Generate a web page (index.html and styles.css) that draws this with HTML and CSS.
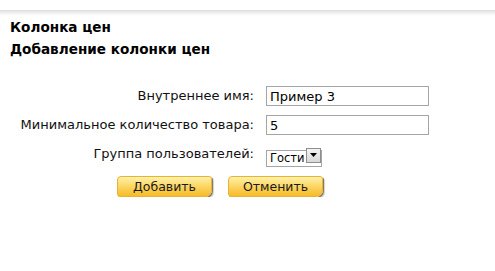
FILE: index.html
```html
<!DOCTYPE html>
<html lang="ru">
<head>
<meta charset="utf-8">
<title>Колонка цен</title>
<link rel="stylesheet" href="styles.css">
</head>
<body>
<div class="topband"></div>
<div class="header">
  <div class="title">Колонка цен</div>
  <div class="title">Добавление колонки цен</div>
</div>
<form class="form">
  <label class="lbl" for="name">Внутреннее имя:</label>
  <input class="txt" id="name" type="text" value="Пример 3">
  <label class="lbl" for="qty">Минимальное количество товара:</label>
  <input class="txt" id="qty" type="text" value="5">
  <label class="lbl" for="grp">Группа пользователей:</label>
  <span class="selwrap">
    <select class="sel" id="grp"><option>Гости</option></select>
    <span class="arrow"><svg width="7" height="4" viewBox="0 0 7 4"><path d="M0 0H7L3.5 4Z" fill="#000"/></svg></span>
  </span>
</form>
<div class="buttons">
  <button class="btn" type="button">Добавить</button>
  <button class="btn" type="button">Отменить</button>
</div>
</body>
</html>
```
FILE: styles.css
```css
html, body {
  margin: 0;
  padding: 0;
  background: #fff;
}
body {
  font-family: "DejaVu Sans", Verdana, sans-serif;
  color: #000;
}
.topband {
  margin-top: 10px;
  height: 6px;
  background: linear-gradient(#dedede, #f4f4f4 60%, #fff);
}
.header {
  padding-left: 10px;
}
.title {
  font-size: 13.6px;
  font-weight: bold;
  line-height: 22px;
}
.form {
  margin: 26px 0 0 0;
  display: grid;
  grid-template-columns: 254px 163px;
  column-gap: 12px;
  row-gap: 9px;
  align-items: center;
}
.lbl {
  text-align: right;
  font-size: 13px;
  line-height: 20px;
  color: #111;
}
.txt {
  box-sizing: border-box;
  width: 163px;
  height: 20px;
  margin: 0;
  padding: 0 3px;
  border: 1px solid #a5a5a5;
  font-family: "DejaVu Sans", Verdana, sans-serif;
  font-size: 13px;
  color: #000;
  outline: none;
}
.selwrap {
  position: relative;
  display: block;
  width: 56px;
  height: 17px;
  margin-top: 2px;
}
.sel {
  appearance: none;
  -webkit-appearance: none;
  box-sizing: border-box;
  width: 56px;
  height: 17px;
  margin: 0;
  padding: 0 16px 0 3px;
  border: 1px solid #a5a5a5;
  border-radius: 0;
  background: #fff;
  font-family: "DejaVu Sans", Verdana, sans-serif;
  font-size: 11.5px;
  line-height: 15px;
  color: #000;
}
.arrow {
  position: absolute;
  right: 1px;
  top: 1px;
  box-sizing: border-box;
  width: 15px;
  height: 15px;
  border: 1px solid #8e8e8e;
  background: linear-gradient(#f4f4f4, #d8d8d8);
  display: flex;
  align-items: center;
  justify-content: center;
}
.buttons {
  margin-top: 12px;
  padding-left: 117px;
  display: flex;
  gap: 16px;
}
.btn {
  box-sizing: border-box;
  width: 95px;
  height: 21px;
  margin: 0;
  padding: 0;
  border: 1px solid #e6b23a;
  border-radius: 4px 3px 7px 3px;
  background: linear-gradient(#fff2a8, #fcd86a 45%, #f6bb26);
  box-shadow: 1px 1px 0 #8c7a55, 2px 2px 1px rgba(0,0,0,0.18);
  font-family: "DejaVu Sans", Verdana, sans-serif;
  font-size: 12.5px;
  color: #1a1a1a;
}
```
